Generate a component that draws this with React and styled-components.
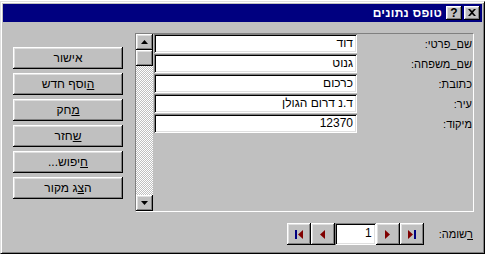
import React from 'react';
import styled, { createGlobalStyle } from 'styled-components';

const GlobalStyle = createGlobalStyle`
  html, body {
    margin: 0;
    padding: 0;
    background: #fff;
  }
  body {
    font-family: "Liberation Sans", "DejaVu Sans", sans-serif;
    font-size: 12px;
    color: #000;
  }
`;

const raised = `
  box-shadow: inset -1px -1px #000, inset 1px 1px #fff,
    inset -2px -2px #808080, inset 2px 2px #dfdfdf;
`;

const sunken = `
  box-shadow: inset 1px 1px #808080, inset -1px -1px #fff,
    inset 2px 2px #000, inset -2px -2px #dfdfdf;
`;

const Screen = styled.div`
  width: 492px;
  height: 258px;
  padding-top: 1px;
  box-sizing: border-box;
  overflow: hidden;
  background: #fff;
`;

const Window = styled.div`
  width: 485px;
  height: 253px;
  box-sizing: border-box;
  background: #c0c0c0;
  border: 1px solid;
  border-color: #dfdfdf #000 #000 #dfdfdf;
  box-shadow: inset 1px 1px #fff, inset -1px -1px #808080;
  padding: 2px;
  display: flex;
  flex-direction: column;
`;

const TitleBar = styled.div`
  height: 18px;
  flex: none;
  background: #000080;
  display: flex;
  justify-content: flex-end;
  align-items: center;
  padding-right: 2px;
`;

const Title = styled.span`
  color: #fff;
  font-weight: 700;
  font-size: 12px;
  direction: rtl;
  margin-right: 4px;
  letter-spacing: 0.3px;
`;

const TitleButton = styled.div`
  width: 16px;
  height: 14px;
  margin-left: ${p => (p.$first ? 0 : 2)}px;
  background: #c0c0c0;
  ${raised}
  display: flex;
  align-items: center;
  justify-content: center;
  font-weight: 700;
  font-size: 12px;
  line-height: 14px;
  padding-bottom: 1px;
  box-sizing: border-box;
`;

const Body = styled.div`
  flex: 1;
  display: flex;
  padding: 11px 8px 0 10px;
  gap: 12px;
`;

const ButtonColumn = styled.div`
  display: flex;
  flex-direction: column;
  gap: 4px;
  margin-top: 14px;
`;

const Button = styled.div`
  width: 110px;
  height: 22px;
  background: #c0c0c0;
  ${raised}
  direction: rtl;
  display: flex;
  align-items: center;
  justify-content: center;
  font-size: 12px;
  padding-bottom: 1px;
  box-sizing: border-box;
`;

const Key = styled.span`
  text-decoration: underline;
`;

const MainColumn = styled.div`
  display: flex;
  flex-direction: column;
`;

const Frame = styled.div`
  width: 339px;
  height: 179px;
  box-sizing: border-box;
  border: 1px solid;
  border-color: #808080 #fff #fff #808080;
  display: flex;
`;

const Scrollbar = styled.div`
  width: 17px;
  display: flex;
  flex-direction: column;
`;

const ScrollButton = styled.div`
  height: 16px;
  background: #c0c0c0;
  ${raised}
  display: flex;
  align-items: center;
  justify-content: center;
`;

const Track = styled.div`
  flex: 1;
  background-color: #fff;
  background-image: repeating-conic-gradient(#c0c0c0 0 25%, #fff 0 50%);
  background-size: 2px 2px;
`;

const Rows = styled.div`
  flex: 1;
  display: flex;
  flex-direction: column;
  gap: 1px;
  padding-left: 1px;
`;

const Row = styled.div`
  display: flex;
  height: 19px;
  align-items: center;
`;

const Field = styled.div`
  width: 203px;
  height: 19px;
  background: #fff;
  ${sunken}
  direction: rtl;
  text-align: right;
  line-height: 19px;
  padding: 0 4px;
  box-sizing: border-box;
  font-size: 12px;
  white-space: nowrap;
  overflow: hidden;
`;

const Label = styled.div`
  flex: 1;
  direction: rtl;
  text-align: right;
  padding-right: 1px;
  font-size: 11px;
`;

const NavRow = styled.div`
  margin-top: 11px;
  display: flex;
  justify-content: flex-end;
  align-items: center;
  gap: 15px;
  padding-right: 1px;
`;

const NavGroup = styled.div`
  display: flex;
`;

const NavButton = styled.div`
  width: 24px;
  height: 22px;
  background: #c0c0c0;
  ${raised}
  display: flex;
  align-items: center;
  justify-content: center;
`;

const RecordBox = styled.div`
  width: 41px;
  height: 22px;
  background: #fff;
  ${sunken}
  text-align: right;
  line-height: 16px;
  padding: 2px 4px 0 0;
  box-sizing: border-box;
  font-size: 12px;
`;

const RecordLabel = styled.span`
  direction: rtl;
  font-size: 11px;
`;

const Arrow = ({ up }) => (
  <svg width="7" height="4" viewBox="0 0 7 4">
    {up ? <path d="M3.5 0 L7 4 L0 4 Z" fill="#000" /> : <path d="M0 0 L7 0 L3.5 4 Z" fill="#000" />}
  </svg>
);

const NavIcon = ({ kind }) => {
  const red = '#800000';
  const blue = '#000080';
  if (kind === 'first') {
    return (
      <svg width="8" height="9" viewBox="0 0 8 9">
        <rect x="0" y="0" width="2" height="9" fill={blue} />
        <path d="M8 0 L8 9 L3 4.5 Z" fill={red} />
      </svg>
    );
  }
  if (kind === 'prev') {
    return (
      <svg width="5" height="9" viewBox="0 0 5 9">
        <path d="M5 0 L5 9 L0 4.5 Z" fill={red} />
      </svg>
    );
  }
  if (kind === 'next') {
    return (
      <svg width="5" height="9" viewBox="0 0 5 9">
        <path d="M0 0 L0 9 L5 4.5 Z" fill={red} />
      </svg>
    );
  }
  return (
    <svg width="8" height="9" viewBox="0 0 8 9">
      <path d="M0 0 L0 9 L5 4.5 Z" fill={red} />
      <rect x="6" y="0" width="2" height="9" fill={blue} />
    </svg>
  );
};

const fields = [
  { label: 'שם_פרטי:', value: 'דוד' },
  { label: 'שם_משפחה:', value: 'גנוט' },
  { label: 'כתובת:', value: 'כרכום' },
  { label: 'עיר:', value: 'ד.נ דרום הגולן' },
  { label: 'מיקוד:', value: '12370' },
];

export default function App() {
  return (
    <Screen>
      <GlobalStyle />
      <Window>
        <TitleBar>
          <Title>טופס נתונים</Title>
          <TitleButton $first>?</TitleButton>
          <TitleButton>
            <svg width="8" height="7" viewBox="0 0 8 7">
              <path d="M0 0 L2 0 L4 2 L6 0 L8 0 L5 3.5 L8 7 L6 7 L4 5 L2 7 L0 7 L3 3.5 Z" fill="#000" />
            </svg>
          </TitleButton>
        </TitleBar>
        <Body>
          <ButtonColumn>
            <Button>אישור</Button>
            <Button><Key>ה</Key>וסף חדש</Button>
            <Button><Key>מ</Key>חק</Button>
            <Button><Key>ש</Key>חזר</Button>
            <Button><Key>ח</Key>יפוש...</Button>
            <Button>ה<Key>צ</Key>ג מקור</Button>
          </ButtonColumn>
          <MainColumn>
            <Frame>
              <Scrollbar>
                <ScrollButton><Arrow up /></ScrollButton>
                <ScrollButton />
                <Track />
                <ScrollButton><Arrow /></ScrollButton>
              </Scrollbar>
              <Rows>
                {fields.map(f => (
                  <Row key={f.label}>
                    <Field>{f.value}</Field>
                    <Label>{f.label}</Label>
                  </Row>
                ))}
              </Rows>
            </Frame>
            <NavRow>
              <NavGroup>
                <NavButton><NavIcon kind="first" /></NavButton>
                <NavButton><NavIcon kind="prev" /></NavButton>
                <RecordBox>1</RecordBox>
                <NavButton><NavIcon kind="next" /></NavButton>
                <NavButton><NavIcon kind="last" /></NavButton>
              </NavGroup>
              <RecordLabel><Key>ר</Key>שומה:</RecordLabel>
            </NavRow>
          </MainColumn>
        </Body>
      </Window>
    </Screen>
  );
}
